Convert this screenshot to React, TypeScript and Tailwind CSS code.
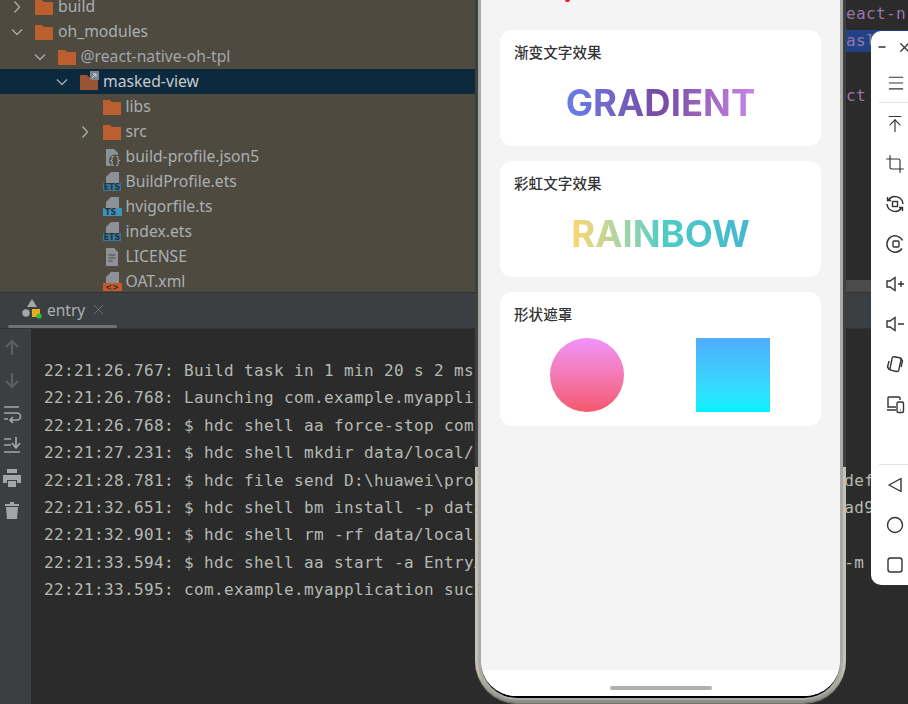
import { ArrowUpToLine, Crop, Menu, Minus, X } from "lucide-react";

// tree rows of the project panel
const treeRows = [
  { label: "build", level: 0, arrow: "right", icon: "folder" },
  { label: "oh_modules", level: 0, arrow: "down", icon: "folder" },
  { label: "@react-native-oh-tpl", level: 1, arrow: "down", icon: "folder", dim: true },
  { label: "masked-view", level: 2, arrow: "down", icon: "link", selected: true },
  { label: "libs", level: 3, icon: "folder" },
  { label: "src", level: 3, arrow: "right", icon: "folder" },
  { label: "build-profile.json5", level: 3, icon: "json" },
  { label: "BuildProfile.ets", level: 3, icon: "ets" },
  { label: "hvigorfile.ts", level: 3, icon: "ts" },
  { label: "index.ets", level: 3, icon: "ets" },
  { label: "LICENSE", level: 3, icon: "text" },
  { label: "OAT.xml", level: 3, icon: "xml" },
];

const logLines = [
  "22:21:26.767: Build task in 1 min 20 s 2 ms",
  "22:21:26.768: Launching com.example.myapplication",
  "22:21:26.768: $ hdc shell aa force-stop com.example.myapplication",
  "22:21:27.231: $ hdc shell mkdir data/local/tmp/4f1c",
  "22:21:28.781: $ hdc file send D:\\huawei\\project\\MyApplication\\entry\\build".padEnd(80) + "def",
  "22:21:32.651: $ hdc shell bm install -p data/local/tmp/4f1c".padEnd(80) + "ad9",
  "22:21:32.901: $ hdc shell rm -rf data/local/tmp/4f1c",
  "22:21:33.594: $ hdc shell aa start -a EntryAbility -b com.example".padEnd(80) + "-m",
  "22:21:33.595: com.example.myapplication successfully launched",
];

function TreeIcon({ type }: { type: string }) {
  if (type === "folder" || type === "link") {
    return (
      <svg width="18" height="18" viewBox="0 0 18 18" className="shrink-0 overflow-visible">
        <path d="M0 2h7l2 2h9v13H0z" fill={type === "link" ? "#9a5433" : "#bb5f2f"} />
        {type === "link" && (
          <>
            <rect x="10" y="-2" width="9" height="9" fill="#7b8288" />
            <path d="M12 5l4-4M13 1h3v3" stroke="#d5d8da" fill="none" />
          </>
        )}
      </svg>
    );
  }
  if (type === "json") {
    return (
      <svg width="18" height="18" viewBox="0 0 18 18" className="shrink-0">
        <path d="M3 1h8l4 4v13H3z" fill="#8b9196" />
        <circle cx="12" cy="12.5" r="6" fill="#4e4a40" />
        <text x="12" y="16" textAnchor="middle" fontSize="10" fontFamily="DejaVu Sans Mono" fill="#a9b0b6">{"{}"}</text>
      </svg>
    );
  }
  if (type === "text") {
    return (
      <svg width="18" height="18" viewBox="0 0 18 18" className="shrink-0">
        <path d="M3 0h8l4 4v14H3z" fill="#8b9196" />
        <path d="M5.5 7h7M5.5 10h7M5.5 13h4" stroke="#4e4a40" strokeWidth="1.2" />
      </svg>
    );
  }
  const band = type === "xml" ? "#c4582a" : type === "ts" ? "#3f93b8" : "#37789a";
  const label = type === "xml" ? "<>" : type === "ts" ? "TS" : "ETS";
  return (
    <svg width="19" height="19" viewBox="0 0 19 19" className="shrink-0">
      <path d="M8 0h8v11H3V5z" fill="#8b9196" />
      <rect x="0" y="11" width={type === "ets" ? 18 : 19} height="8" fill={band} />
      <text x={type === "ts" ? 2 : 9} y="17.6" textAnchor={type === "ts" ? "start" : "middle"} fontSize="8" fontWeight="700" fontFamily="DejaVu Sans" fill="#26323a">
        {label}
      </text>
    </svg>
  );
}

function TreeRow({ row }: { row: (typeof treeRows)[number] }) {
  return (
    <div
      className={`flex h-[25px] items-center ${row.selected ? "bg-[#0d293e] text-[#c6cbcf]" : row.dim ? "text-[#a0a6aa]" : "text-[#a9afb3]"}`}
      style={{ paddingLeft: 9 + row.level * 22.5 }}
    >
      <span className="flex w-[26px] shrink-0 items-center">
        {row.arrow === "down" && (
          <svg width="14" height="14" viewBox="0 0 14 14" className="ml-[1px]">
            <path d="M2 4.5l5 5 5-5" fill="none" stroke="#a5a9a9" strokeWidth="1.4" />
          </svg>
        )}
        {row.arrow === "right" && (
          <svg width="14" height="14" viewBox="0 0 14 14" className="ml-[1px]">
            <path d="M4.5 1.5l5 5.5-5 5.5" fill="none" stroke="#a5a9a9" strokeWidth="1.4" />
          </svg>
        )}
      </span>
      <span className="flex w-[23px] shrink-0">
        <TreeIcon type={row.icon} />
      </span>
      <span className="whitespace-nowrap">{row.label}</span>
    </div>
  );
}

function SideTool({ children, dim }: { children: React.ReactNode; dim?: boolean }) {
  return (
    <svg width="20" height="20" viewBox="0 0 20 20" className={dim ? "text-[#5c6063]" : "text-[#a3a6a8]"}>
      {children}
    </svg>
  );
}

function ConsoleGutter() {
  return (
    <div className="flex w-[31px] shrink-0 flex-col items-center gap-[12.4px] bg-[#3c3f41] pt-[9px] pr-[7px]">
      <SideTool dim>
        <path d="M10 17V3M4 9l6-6 6 6" fill="none" stroke="currentColor" strokeWidth="2" />
      </SideTool>
      <SideTool dim>
        <path d="M10 3v14M4 11l6 6 6-6" fill="none" stroke="currentColor" strokeWidth="2" />
      </SideTool>
      <SideTool>
        <path d="M2 4h15M2 10h13a3 3 0 010 7H9M11 14l-3 3 3 3M2 16h4" fill="none" stroke="currentColor" strokeWidth="1.7" />
      </SideTool>
      <SideTool>
        <path d="M2 4h7M2 10h7M2 17h16M14 2v10M10 8l4 5 4-5" fill="none" stroke="currentColor" strokeWidth="1.7" />
      </SideTool>
      <SideTool>
        <path d="M5 1h10v4H5zM1 7h18v8h-4v-3H5v3H1zM6 13h8v6H6z" fill="currentColor" />
      </SideTool>
      <SideTool>
        <path d="M3 4h14v2H3zM8 2h4v2H8zM4 7h12l-1 12H5z" fill="currentColor" />
      </SideTool>
    </div>
  );
}

function ToolIcon({ children }: { children: React.ReactNode }) {
  return (
    <svg width="20" height="20" viewBox="0 0 20 20" fill="none" stroke="#333333" strokeWidth="1.4">
      {children}
    </svg>
  );
}

function PhoneToolbar() {
  return (
    <div className="absolute top-[31px] left-[871px] flex h-[554px] w-[60px] flex-col rounded-l-[10px] bg-white pl-[6px] text-[#333333]">
      <div className="flex h-[32px] items-center gap-[10px]">
        <Minus size={10} strokeWidth={4} />
        <X size={15} strokeWidth={2} />
      </div>
      <div className="ml-[2px] flex h-[40px] w-[32px] items-center justify-center border-b border-[#e2e2e2] pl-[1px]">
        <Menu size={20} strokeWidth={1.3} />
      </div>
      <div className="flex flex-col pt-[1px] pl-[8px]">
        {[
          <ArrowUpToLine key="top" size={20} strokeWidth={1.4} />,
          <Crop key="crop" size={20} strokeWidth={1.4} />,
          <ToolIcon key="r1">
            <rect x="7.5" y="7.5" width="5" height="5" />
            <path d="M3.5 6A8 8 0 0118 10M16.5 14A8 8 0 012 10M2.5 3v3.5H6M17.5 17v-3.5H14" />
          </ToolIcon>,
          <ToolIcon key="r2">
            <rect x="8" y="7" width="6" height="6" rx="1" />
            <path d="M17.5 6.5A8.2 8.2 0 1017 14.5" />
          </ToolIcon>,
          <ToolIcon key="up">
            <path d="M2 7h3l5-3.5v13L5 13H2zM13 10h6M16 7v6" />
          </ToolIcon>,
          <ToolIcon key="down">
            <path d="M2 7h3l5-3.5v13L5 13H2zM13 10h6" />
          </ToolIcon>,
          <ToolIcon key="rot">
            <rect x="6" y="3" width="9" height="14" rx="2" transform="rotate(12 10 10)" />
            <path d="M4 7l-1.5 6 2 3M16 13l1.5-6-2-3" />
          </ToolIcon>,
          <ToolIcon key="dev">
            <path d="M11 13H3V4a1 1 0 011-1h10a1 1 0 011 1v2M2 16h9" />
            <rect x="12" y="8" width="6.5" height="10.5" rx="1.5" />
            <path d="M15 16h.6" />
          </ToolIcon>,
        ].map((icon, i) => (
          <div key={i} className="flex h-[40px] w-[20px] items-center justify-center">
            {icon}
          </div>
        ))}
      </div>
      <div className="mt-[40px] ml-[2px] w-[40px] border-t border-[#e2e2e2]" />
      <div className="flex flex-col pl-[8px]">
        <div className="flex h-[40px] w-[20px] items-center justify-center">
          <ToolIcon>
            <path d="M16 3.5v13L4 10z" strokeLinejoin="round" />
          </ToolIcon>
        </div>
        <div className="flex h-[40px] w-[20px] items-center justify-center">
          <ToolIcon>
            <circle cx="10" cy="10" r="7.5" />
          </ToolIcon>
        </div>
        <div className="flex h-[40px] w-[20px] items-center justify-center">
          <ToolIcon>
            <rect x="3" y="3" width="14" height="14" rx="2.5" />
          </ToolIcon>
        </div>
      </div>
    </div>
  );
}

function DemoCard({ title, children, tall }: { title: string; children: React.ReactNode; tall?: boolean }) {
  return (
    <div className={`w-[321px] rounded-[12px] bg-white px-[14px] pt-[12px] ${tall ? "h-[134px]" : "h-[116px]"}`}>
      <div className="text-[14.6px] leading-[20px] font-medium text-[#333333]">{title}</div>
      {children}
    </div>
  );
}

function Phone() {
  return (
    <div className="absolute top-0 left-[475px] h-[703px] w-[371px] rounded-b-[42px] bg-linear-to-b from-[#c6c0af] from-95% to-[#8c8b86] px-[3px] pb-[3px] shadow-[0_1px_0_#77746c]">
      {/* the upper part of the frame sits in shadow */}
      <div className="absolute top-0 left-0 h-[467px] w-[3px] bg-[#3f3f3f]" />
      <div className="absolute top-0 right-0 h-[467px] w-[3px] bg-[#3f3f3f]" />
      <div className="h-full rounded-b-[39px] bg-[#a9a9a6] px-[3px] pb-[2px]">
        <div className="h-full rounded-b-[36px] bg-black pb-[2px]">
          <div className="relative flex h-full flex-col overflow-hidden rounded-b-[35px] bg-white font-['Noto_Sans_CJK_SC','Noto_Sans',sans-serif]">
            <div className="absolute top-0 left-[84px] h-[2px] w-[5px] rounded-b-full bg-[#e8202a]" />
            <div className="flex flex-1 flex-col items-center gap-[15px] bg-[#f4f4f4] pt-[30px]">
              <DemoCard title="渐变文字效果">
                <div className="mt-[19px] flex justify-center">
                  <span className="bg-linear-to-r from-[#667eea] via-[#764ba2] to-[#c987e6] bg-clip-text font-['Inter',sans-serif] text-[36.5px] leading-[45px] font-bold text-transparent">
                    GRADIENT
                  </span>
                </div>
              </DemoCard>
              <DemoCard title="彩虹文字效果">
                <div className="mt-[19px] flex justify-center">
                  <span className="bg-linear-to-r from-[#ffd66b] via-[#4ecdc4] to-[#45b7d1] bg-clip-text font-['Inter',sans-serif] text-[36.5px] leading-[45px] font-bold text-transparent">
                    RAINBOW
                  </span>
                </div>
              </DemoCard>
              <DemoCard title="形状遮罩" tall>
                <div className="mt-[14px] flex justify-between pr-[37px] pl-[36px]">
                  <div className="h-[74px] w-[74px] rounded-full bg-linear-to-b from-[#f093fb] to-[#f5576c]" />
                  <div className="h-[74px] w-[74px] bg-linear-to-b from-[#4facfe] to-[#00f2fe]" />
                </div>
              </DemoCard>
            </div>
            <div className="flex h-[26px] shrink-0 justify-center bg-white pt-[16px]">
              <div className="h-[4px] w-[102px] rounded-full bg-[#b0b0b0]" />
            </div>
          </div>
        </div>
      </div>
    </div>
  );
}

export default function App() {
  return (
    <div className="relative flex h-[704px] w-[908px] flex-col overflow-hidden bg-[#2b2b2b]">
      <div className="flex h-[292px] shrink-0 overflow-hidden">
        <div className="-mt-[6px] w-[475px] shrink-0 overflow-hidden bg-[#4e4a40] font-['Noto_Sans',sans-serif] text-[15.7px]">
          {treeRows.map((row) => (
            <TreeRow key={row.label} row={row} />
          ))}
        </div>
        <div className="flex flex-1 flex-col overflow-hidden bg-[#2b2b2b] font-['DejaVu_Sans_Mono',monospace] text-[16px] tracking-[0.37px] text-[#9876aa]">
          <div className="h-[27px] pl-[371px] leading-[27px] whitespace-nowrap">eact-n</div>
          <div className="mt-[3px] h-[22px] bg-[#214283] pl-[371px] leading-[22px] whitespace-nowrap">asl</div>
          <div className="mt-[30px] h-[27px] pl-[371px] leading-[27px] whitespace-nowrap">ct</div>
          <div className="mt-auto h-[12px] bg-[#4b4b4b]" />
        </div>
      </div>
      <div className="flex h-[36px] shrink-0 flex-col border-t border-[#323232] bg-[#3c3f41]">
        <div className="flex flex-1 items-center pl-[22px] font-['Noto_Sans',sans-serif] text-[15.5px] text-[#a9afb3]">
          <svg width="20" height="20" viewBox="0 0 20 20" className="mt-[-1px]">
            <path d="M10 0l5 8H5z" fill="#a5a8aa" />
            <circle cx="4" cy="14" r="3.7" fill="#a5a8aa" />
            <rect x="10" y="10" width="8" height="8" fill="#e6ad1e" />
            <circle cx="17" cy="17" r="2.6" fill="#2fc32f" />
          </svg>
          <span className="mt-[3px] ml-[5px] leading-none">entry</span>
          <X size={17} strokeWidth={1} className="ml-[5px] text-[#7f8386]" />
        </div>
        <div className="ml-[8px] h-[3px] w-[109px] rounded-full bg-[#6e7275]" />
      </div>
      <div className="flex min-h-0 flex-1 border-t border-[#323232]">
        <ConsoleGutter />
        <div className="flex-1 overflow-hidden bg-[#2b2b2b] pt-[28px] pl-[13px] font-['DejaVu_Sans_Mono',monospace] text-[16px] leading-[27.4px] tracking-[0.37px] whitespace-pre text-[#b6b9b3]">
          {logLines.map((line) => (
            <div key={line}>{line}</div>
          ))}
        </div>
      </div>
      <Phone />
      <PhoneToolbar />
    </div>
  );
}
